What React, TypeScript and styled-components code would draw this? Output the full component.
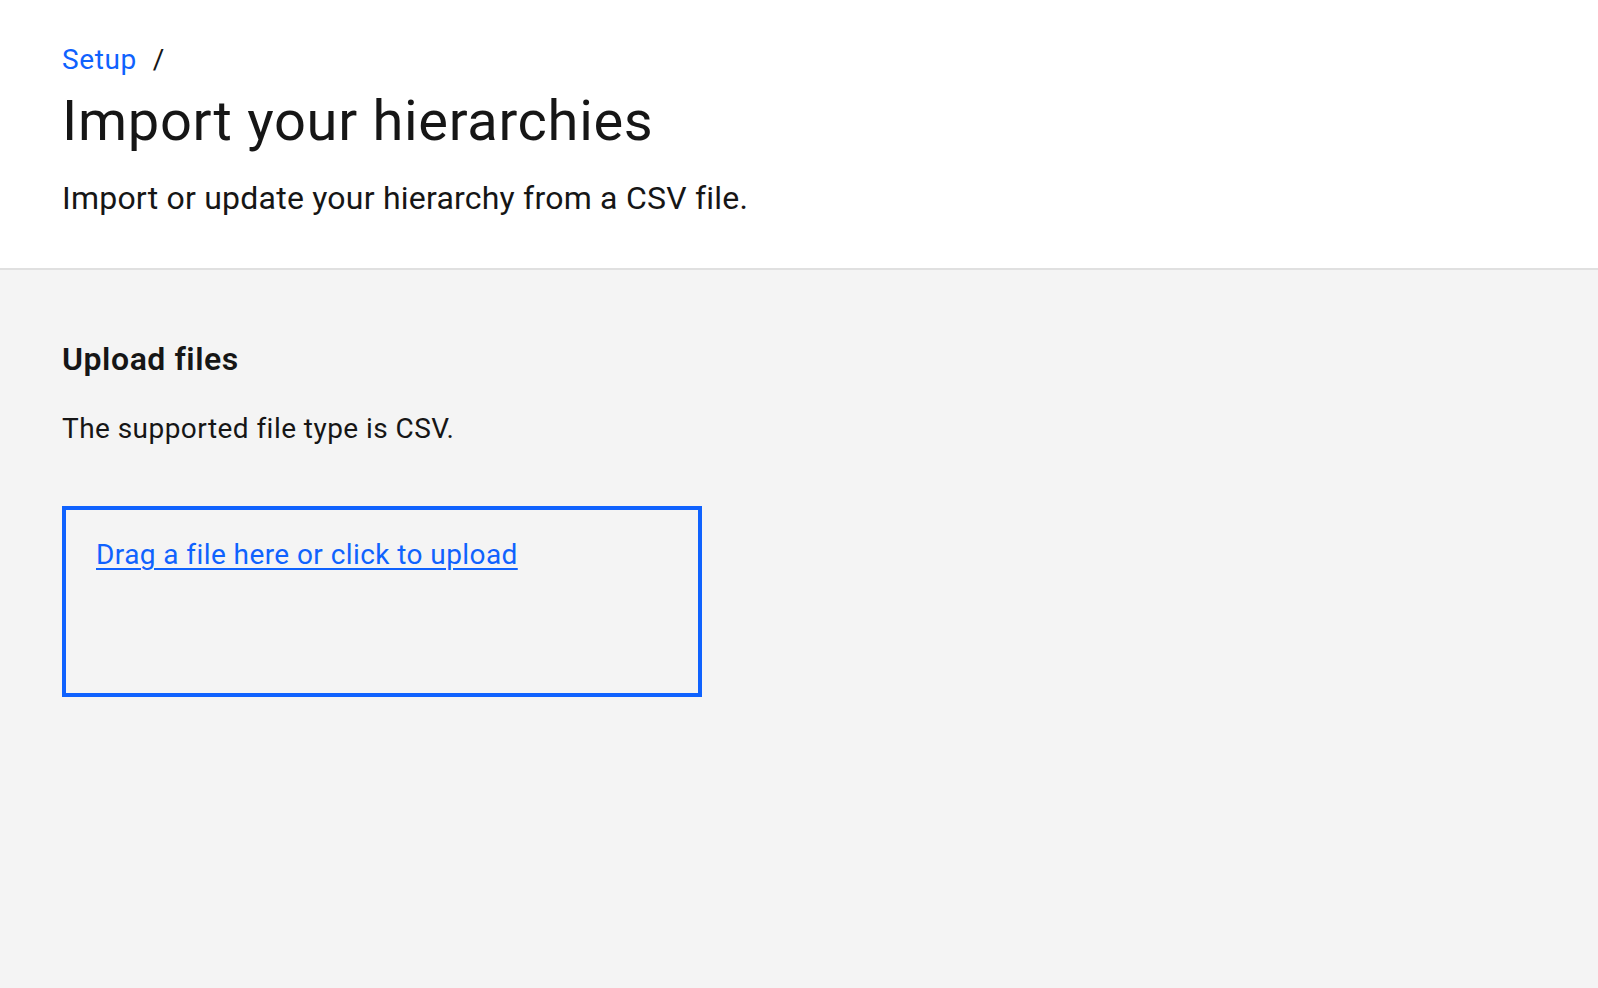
import React from "react";
import styled, { createGlobalStyle } from "styled-components";

const GlobalStyle = createGlobalStyle`
  html, body {
    margin: 0;
    padding: 0;
    background: #f4f4f4;
  }
  body {
    font-family: Roboto, "Liberation Sans", Arial, sans-serif;
    color: #161616;
    -webkit-font-smoothing: antialiased;
  }
  * { box-sizing: border-box; }
`;

const Page = styled.div`
  display: flex;
  flex-direction: column;
  min-height: 100vh;
`;

const Header = styled.header`
  background: #ffffff;
  padding: 42px 62px 46px;
  border-bottom: 2px solid #e0e0e0;
  display: flex;
  flex-direction: column;
`;

const Breadcrumb = styled.nav`
  display: flex;
  align-items: center;
  gap: 16px;
  font-size: 28px;
  line-height: 36px;
  letter-spacing: 0.6px;
`;

const Crumb = styled.a`
  color: #0f62fe;
  text-decoration: none;
  cursor: pointer;
`;

const Separator = styled.span`
  color: #161616;
`;

const Title = styled.h1`
  margin: 7px 0 0;
  font-size: 56px;
  line-height: 72px;
  font-weight: 400;
  letter-spacing: 0.7px;
  color: #161616;
`;

const Subtitle = styled.p`
  margin: 17px 0 0;
  font-size: 32px;
  line-height: 48px;
  font-weight: 400;
  letter-spacing: 0.22px;
  color: #161616;
`;

const Main = styled.main`
  flex: 1;
  background: #f4f4f4;
  padding: 67px 62px 48px;
  display: flex;
  flex-direction: column;
  align-items: flex-start;
`;

const SectionTitle = styled.h2`
  margin: 0;
  font-size: 32px;
  line-height: 44px;
  font-weight: 600;
  letter-spacing: 0.55px;
  color: #161616;
`;

const Helper = styled.p`
  margin: 30px 0 0;
  font-size: 28px;
  line-height: 36px;
  font-weight: 400;
  letter-spacing: 0.45px;
  color: #161616;
`;

const Dropzone = styled.div`
  margin-top: 59px;
  width: 640px;
  height: 191px;
  border: 4px solid #0f62fe;
  padding: 27px 30px;
  cursor: pointer;
`;

const UploadLink = styled.a`
  font-size: 28px;
  line-height: 36px;
  color: #0f62fe;
  text-decoration: underline;
  text-decoration-thickness: 2px;
  text-underline-offset: 4px;
  letter-spacing: 0.42px;
`;

export default function App() {
  return (
    <>
      <GlobalStyle />
      <Page>
        <Header>
          <Breadcrumb aria-label="Breadcrumb">
            <Crumb>Setup</Crumb>
            <Separator>/</Separator>
          </Breadcrumb>
          <Title>Import your hierarchies</Title>
          <Subtitle>Import or update your hierarchy from a CSV file.</Subtitle>
        </Header>
        <Main>
          <SectionTitle>Upload files</SectionTitle>
          <Helper>The supported file type is CSV.</Helper>
          <Dropzone role="button" tabIndex={0}>
            <UploadLink>Drag a file here or click to upload</UploadLink>
          </Dropzone>
        </Main>
      </Page>
    </>
  );
}
